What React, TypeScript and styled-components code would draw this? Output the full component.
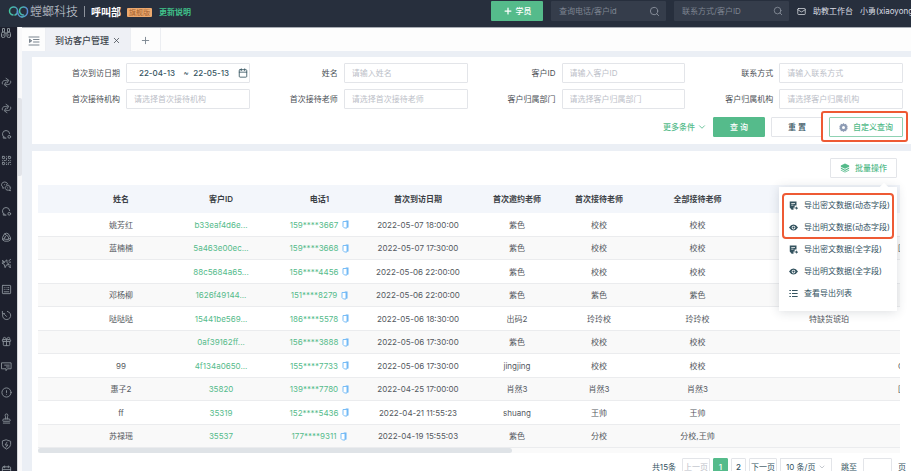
import React from "react";
import styled, { createGlobalStyle, css } from "styled-components";
import {
  QrCode,
  Gift,
  Mail,
  Search,
  Plus,
  X,
  Calendar,
  ChevronDown,
  Stamp,
  CircleAlert,
} from "lucide-react";

const green = "#55bb8b";
const ink = "#34535f";
const line = "#e3e5e9";
const accent = "#ee5a34";

const GlobalStyle = createGlobalStyle`
  * { box-sizing: border-box; }
  body { margin: 0; background: #ebeff5; }
  body, button, input, select, table {
    font-family: Inter, "Noto Sans CJK SC", sans-serif;
    font-size: 8px;
    line-height: 12px;
  }
  button, input, select { margin: 0; padding: 0; border: 0; background: none; color: inherit; }
  button { cursor: pointer; white-space: nowrap; }
  a { color: inherit; text-decoration: none; }
  svg { display: block; flex: none; }
`;

const Page = styled.div`
  display: flex;
  flex-direction: column;
  height: 100vh;
  overflow: hidden;
  color: #54585e;
`;

/* ---------- top bar ---------- */

const TopBar = styled.header`
  display: flex;
  flex: none;
  align-items: flex-start;
  justify-content: space-between;
  height: 27px;
  overflow: hidden;
  background: #272f3d;
  color: #d9dde3;
  white-space: nowrap;
`;

const Brand = styled.div`
  display: flex;
  align-items: center;
  height: 23px;
  padding-left: 8px;
`;

const BrandName = styled.span`
  margin-left: 1px;
  font-size: 12px;
  font-weight: 300;
  line-height: 20px;
  color: #d0d6de;
`;

const Divider = styled.span`
  width: 1px;
  height: 11px;
  margin: 0 6px;
  background: #8d939c;
`;

const Department = styled.strong`
  font-size: 10px;
  line-height: 20px;
  color: #ffffff;
`;

const Badge = styled.span`
  margin: 2px 7px 0 6px;
  padding: 0 2px;
  border-radius: 1px;
  background: #eda96e;
  color: #a4622f;
  font-size: 7px;
  line-height: 9px;
`;

const NewsLink = styled.a`
  color: #40c38b;
  font-weight: 700;
`;

const TopActions = styled.div`
  display: flex;
  flex: none;
  align-items: center;
  gap: 8px;
  width: 420px;
  height: 22px;
`;

const AddButton = styled.button`
  display: flex;
  flex: none;
  align-items: center;
  justify-content: center;
  gap: 3px;
  width: 52px;
  height: 20px;
  border-radius: 1px;
  background: ${green};
  color: #ffffff;
  font-weight: 500;
`;

const TopSearch = styled.label`
  display: flex;
  flex: none;
  align-items: center;
  width: 115px;
  height: 20px;
  padding: 0 6px 0 8px;
  border-radius: 1px;
  background: #353d4b;
  color: #8a919c;
`;

const TopSearchInput = styled.input`
  flex: 1;
  min-width: 0;
  outline: none;
  &::placeholder { color: #7e8591; opacity: 1; }
`;

const TopLinks = styled.nav`
  display: flex;
  flex: none;
  align-items: center;
  gap: 7px;
`;

const TopLink = styled.a`
  display: flex;
  flex: none;
  align-items: center;
`;

/* ---------- frame ---------- */

const Body = styled.div`
  display: flex;
  flex: 1;
  min-height: 0;
`;

const SideNav = styled.nav`
  display: flex;
  flex: none;
  flex-direction: column;
  width: 17px;
  overflow: hidden;
  background: #1d202d;
  color: #8a9299;
`;

const NavLink = styled.a`
  display: flex;
  align-items: center;
  justify-content: center;
  padding-right: 5px;
`;

const NavTop = styled.div`
  flex: none;
  height: 43px;
`;

const NavList = styled.div`
  display: grid;
  flex: 1;
  grid-auto-rows: 1fr;
  margin-bottom: -12px;
`;

const Gutter = styled.div`
  flex: none;
  width: 5px;
  padding-top: 71px;
  border-left: 1px solid #d5d7da;
  background: #f9f9fa;
`;

const GutterThumb = styled.div`
  height: 78px;
  border-radius: 0 2px 2px 0;
  background: #e2e4e9;
`;

const Main = styled.main`
  display: flex;
  flex: 1;
  flex-direction: column;
  min-width: 0;
`;

const TabBar = styled.div`
  display: flex;
  flex: none;
  height: 24px;
  border-top: 1px solid #a9adb4;
  background: #fdfdfd;
`;

const TabButton = styled.button<{ $active?: boolean; $wide?: number }>`
  display: flex;
  align-items: center;
  justify-content: center;
  gap: 3px;
  width: ${(p) => p.$wide}px;
  padding-top: 2px;
  border-right: 1px solid #eceef2;
  background: ${(p) => (p.$active ? "#eef0f5" : "#fdfdfd")};
  color: ${(p) => (p.$active ? "#3d444c" : "#7b858f")};
  font-size: 9px;
  font-weight: 500;
`;

const Content = styled.div`
  display: flex;
  flex: 1;
  flex-direction: column;
  gap: 7px;
  min-height: 0;
  padding: 6px 0 0 10px;
`;

/* ---------- filters ---------- */

const Filters = styled.form`
  flex: none;
  padding: 6px 8px 7px 0;
  background: #ffffff;
`;

const FieldGrid = styled.div`
  display: grid;
  grid-template-columns: repeat(4, 1fr);
  row-gap: 6px;
`;

const Field = styled.label`
  display: grid;
  grid-template-columns: 94px 1fr;
  align-items: center;
`;

const FieldName = styled.span`
  padding-right: 6px;
  color: #4b4f55;
  text-align: right;
`;

const box = css`
  height: 20px;
  border: 1px solid ${line};
  border-radius: 1px;
  background: #ffffff;
`;

const FieldInput = styled.input`
  ${box}
  width: 100%;
  min-width: 0;
  padding: 0 7px;
  outline: none;
  &::placeholder { color: #bcc0c8; opacity: 1; }
`;

const DateRange = styled.span`
  ${box}
  display: flex;
  align-items: center;
  justify-content: space-between;
  padding: 0 1px 0 12px;
  color: ${ink};
`;

const DateInput = styled.input`
  width: 40px;
  font-weight: 500;
  outline: none;
`;

const FilterActions = styled.div`
  display: flex;
  align-items: center;
  justify-content: flex-end;
  gap: 6px;
  padding-top: 8px;
`;

const MoreLink = styled.button`
  display: flex;
  align-items: center;
  gap: 2px;
  color: ${green};
  font-weight: 500;
`;

const Button = styled.button<{ $kind: "primary" | "plain" | "outline"; $width: number }>`
  ${box}
  display: flex;
  align-items: center;
  justify-content: center;
  gap: 5px;
  width: ${(p) => p.$width}px;
  font-weight: 500;
  color: ${ink};
  white-space: pre;
  ${(p) => p.$kind === "primary" && css`border-color: ${green}; background: ${green}; color: #ffffff;`}
  ${(p) => p.$kind === "outline" && css`border-color: #8fd2b3; color: ${green};`}
`;

const Marked = styled.div`
  position: relative;
  &::after {
    content: "";
    position: absolute;
    inset: -6px -5px -5px -8px;
    border: 2px solid ${accent};
    border-radius: 3px;
    pointer-events: none;
  }
`;

/* ---------- results ---------- */

const Results = styled.section`
  flex: 1;
  min-height: 0;
  padding: 7px 0 0 6px;
  background: #ffffff;
`;

const Toolbar = styled.div`
  display: flex;
  justify-content: flex-end;
  padding: 0 14px 7px 0;
`;

const MenuAnchor = styled.div`
  position: relative;
`;

const Menu = styled.div`
  position: absolute;
  z-index: 2;
  top: 29px;
  right: 0;
  width: 118px;
  padding: 7px 4px;
  background: #ffffff;
  box-shadow: 0 1px 10px rgba(40, 50, 70, 0.16);
  &::before {
    content: "";
    position: absolute;
    top: -3px;
    right: 10px;
    width: 6px;
    height: 6px;
    background: #ffffff;
    transform: rotate(45deg);
  }
`;

const MenuGroup = styled.div<{ $marked?: boolean }>`
  border-radius: 3px;
  outline: ${(p) => (p.$marked ? `2px solid ${accent}` : "none")};
  outline-offset: -1px;
`;

const MenuItem = styled.button`
  display: flex;
  align-items: center;
  gap: 6px;
  width: 100%;
  height: 22px;
  padding-left: 6px;
  color: ${ink};
`;

const TableScroller = styled.div`
  margin-right: 11px;
  overflow: hidden;
`;

const Table = styled.table`
  width: 1000px;
  border-collapse: separate;
  border-spacing: 0;
  table-layout: fixed;
  text-align: center;
`;

const Th = styled.th`
  height: 28px;
  padding: 0;
  background: #f3f6fb;
  color: #3b3f45;
  font-weight: 600;
`;

const Row = styled.tr`
  height: 23px;
  &:nth-child(even) { height: 24px; background: #f9f9f9; }
`;

const Td = styled.td`
  padding: 0;
  white-space: nowrap;
  ${Row}:nth-child(even) > & { border-top: 1px solid #ebecee; border-bottom: 1px solid #ebecee; }
  &:last-child { padding-left: 2px; text-align: left; }
`;

const IdLink = styled.a`
  color: ${green};
`;

const Phone = styled.span`
  display: inline-flex;
  align-items: center;
  gap: 4px;
  color: ${green};
  vertical-align: top;
`;

const ScrollTrack = styled.div`
  height: 5px;
  margin-right: 11px;
  background: #fafafa;
`;

const ScrollThumb = styled.div`
  width: 55%;
  height: 5px;
  border-radius: 3px;
  background: #dfe3e7;
`;

const Pager = styled.nav`
  display: flex;
  align-items: center;
  justify-content: flex-end;
  gap: 3px;
  padding: 5px 2px 0 0;
  color: ${ink};
`;

const PagerText = styled.span`
  margin: 0 3px;
`;

const PageButton = styled.button<{ $state?: "current" | "off"; $wide?: boolean }>`
  height: 18px;
  width: ${(p) => (p.$wide ? 28 : 15)}px;
  border: 1px solid ${line};
  border-radius: 1px;
  font-weight: ${(p) => (p.$wide ? 400 : 500)};
  ${(p) => p.$state === "current" && css`border-color: ${green}; background: ${green}; color: #ffffff;`}
  ${(p) => p.$state === "off" && css`color: #bcc0c8;`}
`;

const SizePicker = styled.label`
  display: flex;
  align-items: center;
  width: 52px;
  height: 18px;
  margin-right: 3px;
  padding: 0 5px;
  border: 1px solid ${line};
  color: #a9afb8;
`;

const SizeSelect = styled.select`
  flex: 1;
  min-width: 0;
  appearance: none;
  color: ${ink};
  outline: none;
`;

const JumpInput = styled.input`
  width: 29px;
  height: 18px;
  border: 1px solid ${line};
  border-radius: 1px;
`;

/* ---------- drawings ---------- */

type GlyphProps = { children: React.ReactNode; size?: number };

const Glyph = ({ children, size = 11 }: GlyphProps) => (
  <svg width={size} height={size} viewBox="0 0 24 24" fill="none" stroke="currentColor" strokeWidth="2" strokeLinecap="round" strokeLinejoin="round" aria-hidden="true">
    {children}
  </svg>
);

const Logo = () => (
  <svg width="21" height="14" viewBox="0 0 42 28" fill="none" strokeWidth="3" strokeLinecap="round" aria-hidden="true">
    <defs>
      <linearGradient id="logo" x1="0" x2="1">
        <stop offset="0" stopColor="#43c7a0" />
        <stop offset="1" stopColor="#5a87d8" />
      </linearGradient>
    </defs>
    <g stroke="url(#logo)">
      <path d="M10 20A8 8 0 1 1 19 13C20 20 23 24 28 24" />
      <path d="M14 20C18 19 19 16 19 12" />
      <path d="M28 24C36 24 40 17 39 11A8 8 0 1 0 31 20" />
    </g>
  </svg>
);

const Binoculars = () => (
  <Glyph size={12}>
    <path d="M5 9V3h4v6M15 9V3h4v6M9 12h6" />
    <rect x="3" y="10" width="7" height="11" rx="3" />
    <rect x="14" y="10" width="7" height="11" rx="3" />
    <path d="M6 16h1M17 16h1" />
  </Glyph>
);

const Sync = () => (
  <Glyph>
    <path d="M3 15C1 9 7 6 14 8M11 3l6 4-4 6" />
    <path d="M21 9c2 6-4 9-11 7M13 21l-6-4 4-6" />
  </Glyph>
);

const Bubble = () => (
  <Glyph>
    <path d="M9 19a8 8 0 1 1 10-9" />
    <path d="M5 18v2h6" />
    <circle cx="18" cy="17" r="3" />
  </Glyph>
);

const Bubbles = () => (
  <Glyph>
    <path d="M6 15l-2 1v-3a7 6 0 1 1 11-6" />
    <path d="M20 18a6 5 0 1 0-4 2l4 1z" />
    <path d="M8 8h.1M12 8h.1M14 15h.1M18 15h.1" />
  </Glyph>
);

const Ring = () => (
  <Glyph>
    <path d="M8 4q4-3 8 0l5 9q1 6-5 7H8q-6-1-5-7z" />
    <path d="M10 9l-3 5q0 3 3 2h5q3 0 2-3l-3-5M8 4l5 4M21 14l-6 2M4 17l4-4" />
  </Glyph>
);

const Spark = () => (
  <Glyph>
    <path d="M3 6l5 2 5-4v6l5 4-6 1-3 6-2-7-5-3 5-1z" />
    <path d="M17 6l4-3M18 9h3M16 17l4 4M20 15v6" />
  </Glyph>
);

const Form = () => (
  <Glyph>
    <rect x="3" y="3" width="18" height="18" rx="1" />
    <path d="M7 8h.1M11 8h.1M15 8h2M7 12h.1M11 12h.1M15 12h2M7 17h10" />
  </Glyph>
);

const Clock = () => (
  <Glyph>
    <path d="M14 3a9 9 0 1 1-10 5M3 3v5h5M12 14L8 10" />
  </Glyph>
);

const Chat = () => (
  <Glyph>
    <path d="M2 4h20v13h-8l-3 4v-4H2zM8 9h10M12 13h6" />
  </Glyph>
);

const Shield = () => (
  <Glyph>
    <path d="M12 2l9 3v7q0 6-9 10-9-4-9-10V5zM13 7l-4 6h6l-4 5" />
  </Glyph>
);

const Collapse = () => (
  <Glyph size={12}>
    <path d="M2 4h20M11 9h11M11 14h11M2 20h20" />
    <path d="M3 9v6l4-3z" fill="currentColor" />
  </Glyph>
);

const CopyIcon = () => (
  <svg width="7" height="9" viewBox="0 0 14 18" fill="none" aria-hidden="true">
    <path d="M4 1h9v14h-3V5L7 1z" fill="#6cb6f5" />
    <path d="M2 3h8v13H5l-3-3z" fill="#ffffff" stroke="#79bdf6" strokeWidth="2" />
  </svg>
);

const Gear = () => (
  <svg width="9" height="9" viewBox="0 0 24 24" aria-hidden="true">
    <path fillRule="evenodd" fill="#8e9cb5" d="M12 0l3 3 4-1 1 4 3 2-1 4 1 4-3 2-1 4-4-1-3 3-3-3-4 1-1-4-3-2 1-4-1-4 3-2 1-4 4 1zM12 8a4 4 0 1 0 0 8 4 4 0 0 0 0-8z" />
  </svg>
);

const Layers = () => (
  <svg width="10" height="10" viewBox="0 0 24 24" fill={green} aria-hidden="true">
    <path d="M12 1l10 5v3l-10 5L2 9V6zM2 11l10 5 10-5v3l-10 5-10-5zM2 16l10 5 10-5v2l-10 5-10-5z" />
  </svg>
);

const ExportIcon = () => (
  <svg width="9" height="9" viewBox="0 0 24 24" aria-hidden="true">
    <path fillRule="evenodd" fill={ink} d="M2 1h18v11h-5v5h-3v6H7l-5-6zM6 5v2h10V5zM6 10v2h6v-2z" />
    <path fill={ink} d="M15 17h4v-3l5 5-5 4v-3h-4z" />
  </svg>
);

const EyeIcon = () => (
  <svg width="9" height="9" viewBox="0 0 24 24" aria-hidden="true">
    <path fillRule="evenodd" fill={ink} d="M0 12Q5 4 12 4t12 8q-5 8-12 8T0 12zM12 7a5 5 0 1 0 0 10 5 5 0 0 0 0-10z" />
    <circle cx="12" cy="12" r="3" fill={ink} />
  </svg>
);

const ListIcon = () => (
  <svg width="9" height="9" viewBox="0 0 24 24" stroke={ink} strokeWidth="3" aria-hidden="true">
    <path d="M1 4h4M8 4h15M1 12h4M8 12h15M1 20h4M8 20h15" />
  </svg>
);

/* ---------- data ---------- */

const navItems: [string, React.ReactNode][] = [
  ["同步", <Sync />],
  ["转换", <Sync />],
  ["咨询", <Bubble />],
  ["二维码", <QrCode size={11} />],
  ["会话", <Bubbles />],
  ["回访", <Bubble />],
  ["循环", <Ring />],
  ["营销", <Spark />],
  ["表单", <Form />],
  ["时间", <Clock />],
  ["礼品", <Gift size={11} />],
  ["消息", <Chat />],
  ["提醒", <CircleAlert size={11} />],
  ["审批", <Stamp size={11} />],
  ["安全", <Shield />],
  ["日历", <Calendar size={11} />],
];

const fields: [string, string][] = [
  ["姓名", "请输入姓名"],
  ["客户ID", "请输入客户ID"],
  ["联系方式", "请输入联系方式"],
  ["首次接待机构", "请选择首次接待机构"],
  ["首次接待老师", "请选择首次接待老师"],
  ["客户归属部门", "请选择客户归属部门"],
  ["客户归属机构", "请选择客户归属机构"],
];

const columns: [string, number][] = [
  ["", 34],
  ["姓名", 98],
  ["客户ID", 102],
  ["电话1", 95],
  ["首次到访日期", 102],
  ["首次邀约老师", 96],
  ["首次接待老师", 68],
  ["全部接待老师", 129],
  ["", 134],
  ["", 142],
];

const rows: string[][] = [
  ["姚芳红", "b33eaf4d6e...", "159****3667", "2022-05-07 18:00:00", "紫色", "校校", "校校", "", ""],
  ["蓝楠楠", "5a463e00ec...", "159****3668", "2022-05-07 17:30:00", "紫色", "校校", "校校", "", "回"],
  ["", "88c5684a65...", "156****4456", "2022-05-06 22:00:00", "紫色", "校校", "校校", "", ""],
  ["邓杨柳", "1626f49144...", "151****8279", "2022-05-06 22:00:00", "紫色", "紫色", "紫色", "", ""],
  ["哒哒哒", "15441be569...", "186****5578", "2022-05-06 18:30:00", "出码2", "玲玲校", "玲玲校", "特缺货琥珀", ""],
  ["", "0af39162ff...", "156****3888", "2022-05-06 17:30:00", "紫色", "校校", "校校", "", ""],
  ["99", "4f134a0650...", "155****7733", "2022-05-06 17:30:00", "jingjing", "校校", "校校", "", "C"],
  ["惠子2", "35820", "139****7780", "2022-04-25 17:00:00", "肖然3", "肖然3", "肖然3", "", "回"],
  ["ff", "35319", "152****5436", "2022-04-21 11:55:23", "shuang", "王帅", "王帅", "", ""],
  ["苏禄瑶", "35537", "177****9311", "2022-04-19 15:55:03", "紫色", "分校", "分校,王帅", "", ""],
];

export default function App() {
  return (
    <Page>
      <GlobalStyle />
      <TopBar>
        <Brand>
          <Logo />
          <BrandName>螳螂科技</BrandName>
          <Divider />
          <Department>呼叫部</Department>
          <Badge>旗舰版</Badge>
          <NewsLink href="#news">更新说明</NewsLink>
        </Brand>
        <TopActions>
          <AddButton type="button">
            <Plus size={10} strokeWidth={3} />
            学员
          </AddButton>
          <TopSearch>
            <TopSearchInput placeholder="查询电话/客户id" aria-label="查询电话/客户id" />
            <Search size={11} />
          </TopSearch>
          <TopSearch>
            <TopSearchInput placeholder="联系方式/客户ID" aria-label="联系方式/客户ID" />
            <Search size={10} />
          </TopSearch>
          <TopLinks>
            <TopLink href="#mail" aria-label="邮件"><Mail size={9} /></TopLink>
            <TopLink href="#desk">助教工作台</TopLink>
            <TopLink href="#me">小勇(xiaoyong)</TopLink>
          </TopLinks>
        </TopActions>
      </TopBar>

      <Body>
        <SideNav>
          <NavTop>
            <NavLink href="#find" aria-label="查找"><Binoculars /></NavLink>
          </NavTop>
          <NavList>
            {navItems.map(([name, icon]) => (
              <NavLink key={name} href="#nav" aria-label={name}>{icon}</NavLink>
            ))}
          </NavList>
        </SideNav>
        <Gutter><GutterThumb /></Gutter>

        <Main>
          <TabBar>
            <TabButton type="button" $wide={24} aria-label="收起菜单"><Collapse /></TabButton>
            <TabButton type="button" $active $wide={85}>到访客户管理<X size={9} /></TabButton>
            <TabButton type="button" $wide={30} aria-label="新建标签"><Plus size={11} /></TabButton>
          </TabBar>

          <Content>
            <Filters onSubmit={(e) => e.preventDefault()}>
              <FieldGrid>
                <Field as="div">
                  <FieldName>首次到访日期</FieldName>
                  <DateRange>
                    <DateInput defaultValue="22-04-13" aria-label="首次到访日期起" />
                    <span>~</span>
                    <DateInput defaultValue="22-05-13" aria-label="首次到访日期止" />
                    <Calendar size={10} />
                  </DateRange>
                </Field>
                {fields.map(([name, hint]) => (
                  <Field key={name}>
                    <FieldName>{name}</FieldName>
                    <FieldInput placeholder={hint} />
                  </Field>
                ))}
              </FieldGrid>
              <FilterActions>
                <MoreLink type="button">更多条件<ChevronDown size={10} /></MoreLink>
                <Button type="submit" $kind="primary" $width={52}>查 询</Button>
                <Button type="reset" $kind="plain" $width={52}>重 置</Button>
                <Marked>
                  <Button type="button" $kind="outline" $width={74}><Gear />自定义查询</Button>
                </Marked>
              </FilterActions>
            </Filters>

            <Results>
              <Toolbar>
                <MenuAnchor>
                  <Button type="button" $kind="plain" $width={67}>
                    <Layers />
                    <IdLink as="span">批量操作</IdLink>
                  </Button>
                  <Menu>
                    <MenuGroup $marked>
                      <MenuItem type="button"><ExportIcon />导出密文数据(动态字段)</MenuItem>
                      <MenuItem type="button"><EyeIcon />导出明文数据(动态字段)</MenuItem>
                    </MenuGroup>
                    <MenuGroup>
                      <MenuItem type="button"><ExportIcon />导出密文数据(全字段)</MenuItem>
                      <MenuItem type="button"><EyeIcon />导出明文数据(全字段)</MenuItem>
                      <MenuItem type="button"><ListIcon />查看导出列表</MenuItem>
                    </MenuGroup>
                  </Menu>
                </MenuAnchor>
              </Toolbar>

              <TableScroller>
                <Table>
                  <colgroup>
                    {columns.map(([, width], i) => <col key={i} width={width} />)}
                  </colgroup>
                  <thead>
                    <tr>{columns.map(([name], i) => <Th key={i}>{name}</Th>)}</tr>
                  </thead>
                  <tbody>
                    {rows.map(([name, id, phone, ...rest]) => (
                      <Row key={id}>
                        <Td />
                        <Td>{name}</Td>
                        <Td><IdLink href="#customer">{id}</IdLink></Td>
                        <Td><Phone>{phone}<CopyIcon /></Phone></Td>
                        {rest.map((text, i) => <Td key={i}>{text}</Td>)}
                      </Row>
                    ))}
                  </tbody>
                </Table>
              </TableScroller>
              <ScrollTrack><ScrollThumb /></ScrollTrack>

              <Pager aria-label="分页">
                <PagerText>共15条</PagerText>
                <PageButton type="button" $wide $state="off" disabled>上一页</PageButton>
                <PageButton type="button" $state="current">1</PageButton>
                <PageButton type="button">2</PageButton>
                <PageButton type="button" $wide>下一页</PageButton>
                <SizePicker>
                  <SizeSelect aria-label="每页条数" defaultValue="10">
                    <option value="10">10 条/页</option>
                    <option value="20">20 条/页</option>
                  </SizeSelect>
                  <ChevronDown size={8} />
                </SizePicker>
                <PagerText>跳至</PagerText>
                <JumpInput aria-label="跳至页码" />
                <PagerText>页</PagerText>
              </Pager>
            </Results>
          </Content>
        </Main>
      </Body>
    </Page>
  );
}
